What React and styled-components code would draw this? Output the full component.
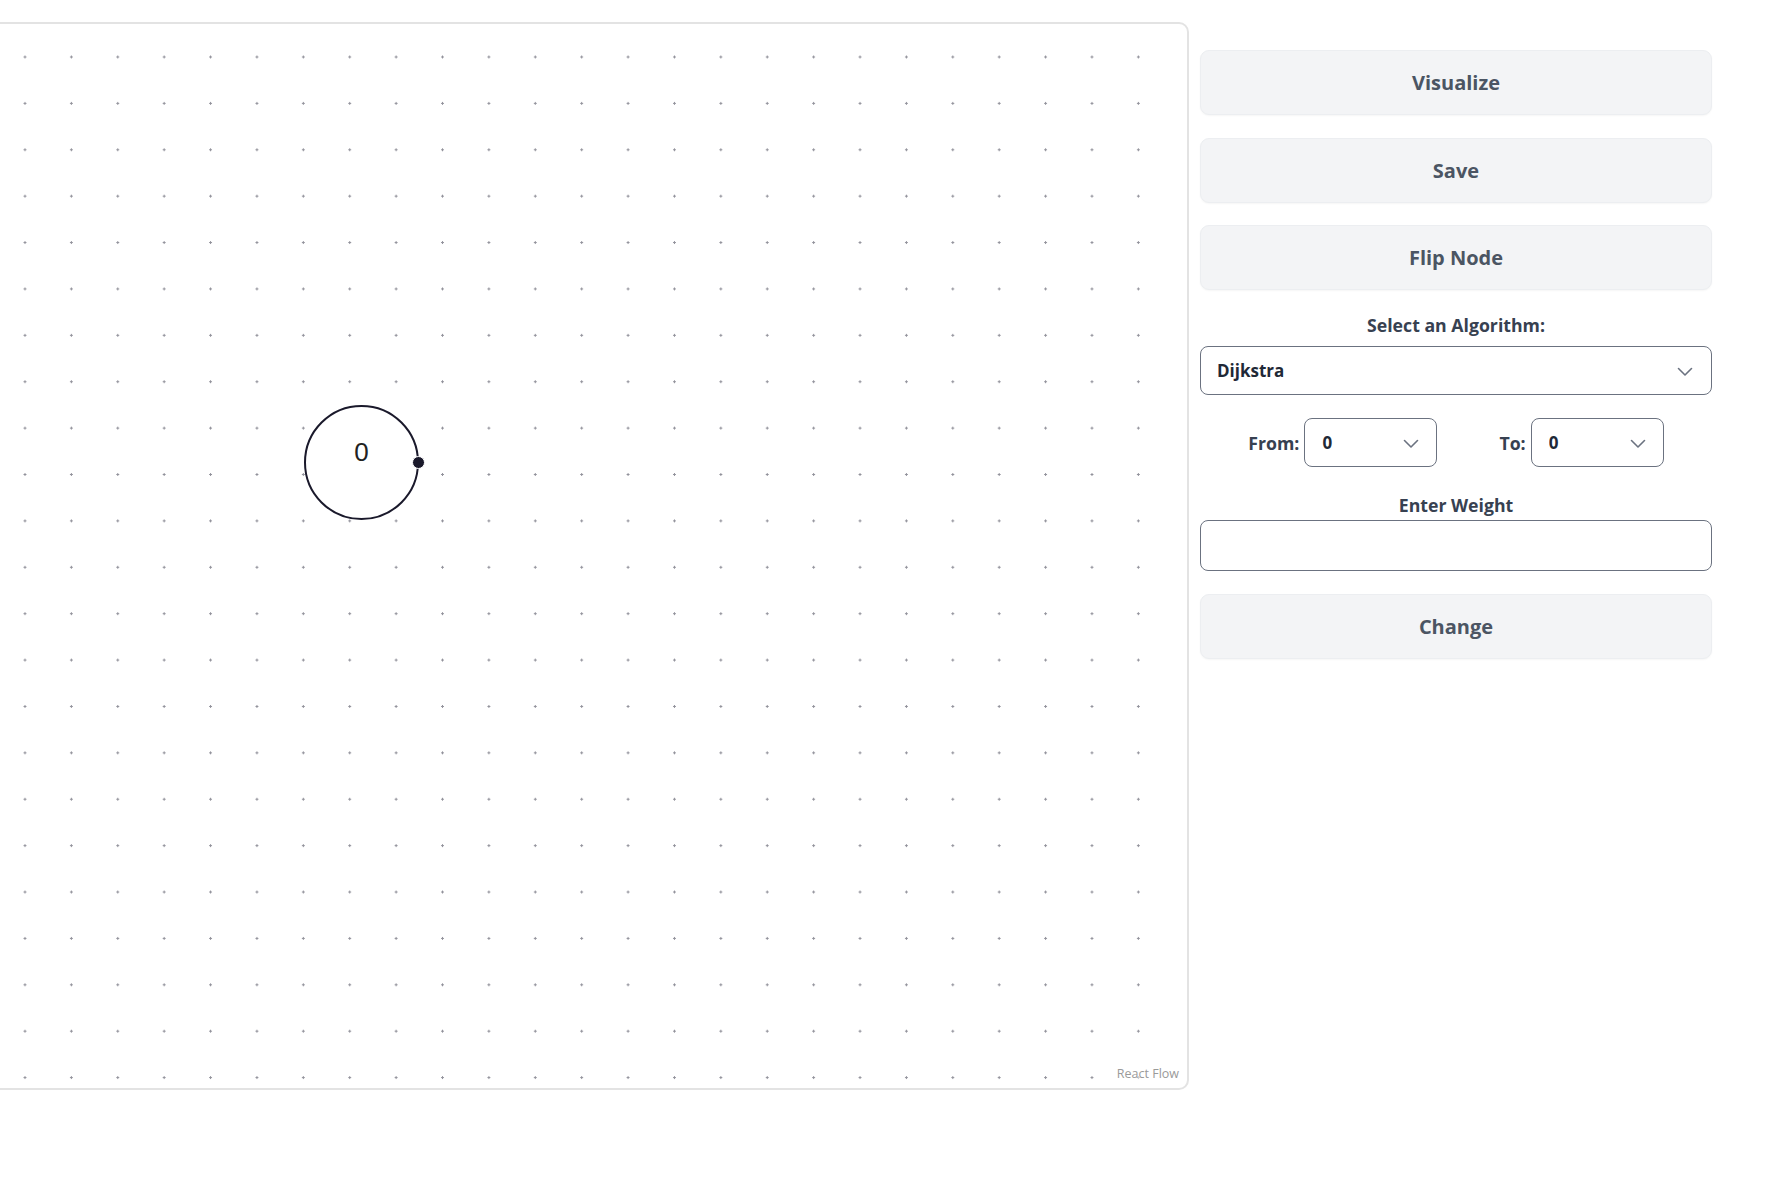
import styled, { createGlobalStyle } from "styled-components";

const GlobalStyle = createGlobalStyle`
  body {
    margin: 0;
    background: #ffffff;
    font-family: "Open Sans", "Noto Sans", sans-serif;
    overflow: hidden;
  }
`

const Page = styled.main`
  display: flex;
  align-items: flex-start;
  gap: 11px;
  padding-top: 22px;
  height: 1182px;
  box-sizing: border-box;
`

const Canvas = styled.section`
  position: relative;
  flex: none;
  width: 1199px;
  height: 1068px;
  margin-left: -10px;
  padding-right: 4px;
  box-sizing: border-box;
  border: 2px solid #e3e3e3;
  border-radius: 10px;
  background-color: #ffffff;
  background-image: radial-gradient(circle, #92929b 1px, transparent 1.3px);
  background-size: 46.4px 46.4px;
  background-position: 9.8px 9.8px;
  background-clip: content-box;
  overflow: hidden;
`

const Node = styled.div`
  position: absolute;
  left: 312px;
  top: 381px;
  width: 115px;
  height: 115px;
  box-sizing: border-box;
  border: 2px solid #1a192b;
  border-radius: 50%;
  background: #ffffff;
  display: flex;
  align-items: center;
  justify-content: center;
  padding-bottom: 20px;
  font-family: "Liberation Sans", Arial, sans-serif;
  font-size: 26px;
  color: #222222;
`

const Handle = styled.span`
  position: absolute;
  right: -8px;
  top: 50%;
  width: 11px;
  height: 11px;
  margin-top: -7px;
  border-radius: 50%;
  background: #1a192b;
  border: 1px solid #ffffff;
`

const Attribution = styled.div`
  position: absolute;
  right: 4px;
  bottom: 4px;
  padding: 2px 4px;
  font-size: 12.5px;
  color: #9a9a9a;
  background: rgba(255, 255, 255, 0.5);
`

const Panel = styled.aside`
  flex: none;
  width: 512px;
  margin-top: 28px;
  display: flex;
  flex-direction: column;
`

const ActionButton = styled.button`
  height: 65px;
  margin-bottom: ${p => p.$gap || 23}px;
  border: 1px solid #eceef1;
  border-radius: 9px;
  background: #f3f4f6;
  box-shadow: 0 1px 2px rgba(0, 0, 0, 0.04);
  font-family: inherit;
  font-size: 20px;
  font-weight: 700;
  color: #4b5563;
  cursor: pointer;
`

const FieldLabel = styled.label`
  display: block;
  text-align: center;
  font-size: 17.7px;
  font-weight: 700;
  color: #374151;
  line-height: 26px;
  margin-bottom: ${p => p.$gap || 6}px;
`

const SelectBox = styled.div`
  position: relative;
  width: ${p => p.$width || "100%"};
  height: ${p => p.$height || 49}px;
`

const Select = styled.select`
  appearance: none;
  width: 100%;
  height: 100%;
  box-sizing: border-box;
  border: 1.5px solid #6b7280;
  border-radius: 8px;
  background: #ffffff;
  padding-left: ${p => p.$pad || 16}px;
  font-family: inherit;
  font-size: 17px;
  font-weight: 700;
  color: #1f2937;
`

const Chevron = styled.svg`
  position: absolute;
  right: ${p => p.$right || 18}px;
  top: 50%;
  width: 16px;
  height: 16px;
  margin-top: -7px;
  pointer-events: none;
`

const Row = styled.div`
  display: flex;
  justify-content: center;
  gap: 62px;
  margin: 23px 0 25px;
`

const Pair = styled.div`
  display: flex;
  align-items: center;
  gap: 5px;
`

const PairLabel = styled.span`
  font-size: 17.7px;
  font-weight: 700;
  color: #374151;
`

const WeightInput = styled.input`
  height: 51px;
  box-sizing: border-box;
  border: 1.5px solid #6b7280;
  border-radius: 8px;
  margin-bottom: 23px;
  font-family: inherit;
  font-size: 16px;
  padding: 0 14px;
`

const Arrow = ({ right }) => (
  <Chevron $right={right} viewBox="0 0 16 16" fill="none">
    <path d="M1.5 4.5L8 11l6.5-6.5" stroke="#6b7280" strokeWidth="1.6" strokeLinecap="round" strokeLinejoin="round" />
  </Chevron>
)

const App = () => {
  return (
    <>
      <GlobalStyle />
      <Page>
        <Canvas>
          <Node>
            0
            <Handle />
          </Node>
          <Attribution>React Flow</Attribution>
        </Canvas>
        <Panel>
          <ActionButton>Visualize</ActionButton>
          <ActionButton $gap={22}>Save</ActionButton>
          <ActionButton $gap={22}>Flip Node</ActionButton>
          <FieldLabel $gap={8}>Select an Algorithm:</FieldLabel>
          <SelectBox>
            <Select defaultValue="dijkstra">
              <option value="dijkstra">Dijkstra</option>
              <option value="bfs">BFS</option>
              <option value="dfs">DFS</option>
            </Select>
            <Arrow right={19} />
          </SelectBox>
          <Row>
            <Pair>
              <PairLabel>From:</PairLabel>
              <SelectBox $width="133px">
                <Select $pad={17} defaultValue="0">
                  <option value="0">0</option>
                </Select>
                <Arrow right={18} />
              </SelectBox>
            </Pair>
            <Pair>
              <PairLabel>To:</PairLabel>
              <SelectBox $width="133px">
                <Select $pad={17} defaultValue="0">
                  <option value="0">0</option>
                </Select>
                <Arrow right={18} />
              </SelectBox>
            </Pair>
          </Row>
          <FieldLabel $gap={2}>Enter Weight</FieldLabel>
          <WeightInput type="text" />
          <ActionButton>Change</ActionButton>
        </Panel>
      </Page>
    </>
  )
}

export default App;
